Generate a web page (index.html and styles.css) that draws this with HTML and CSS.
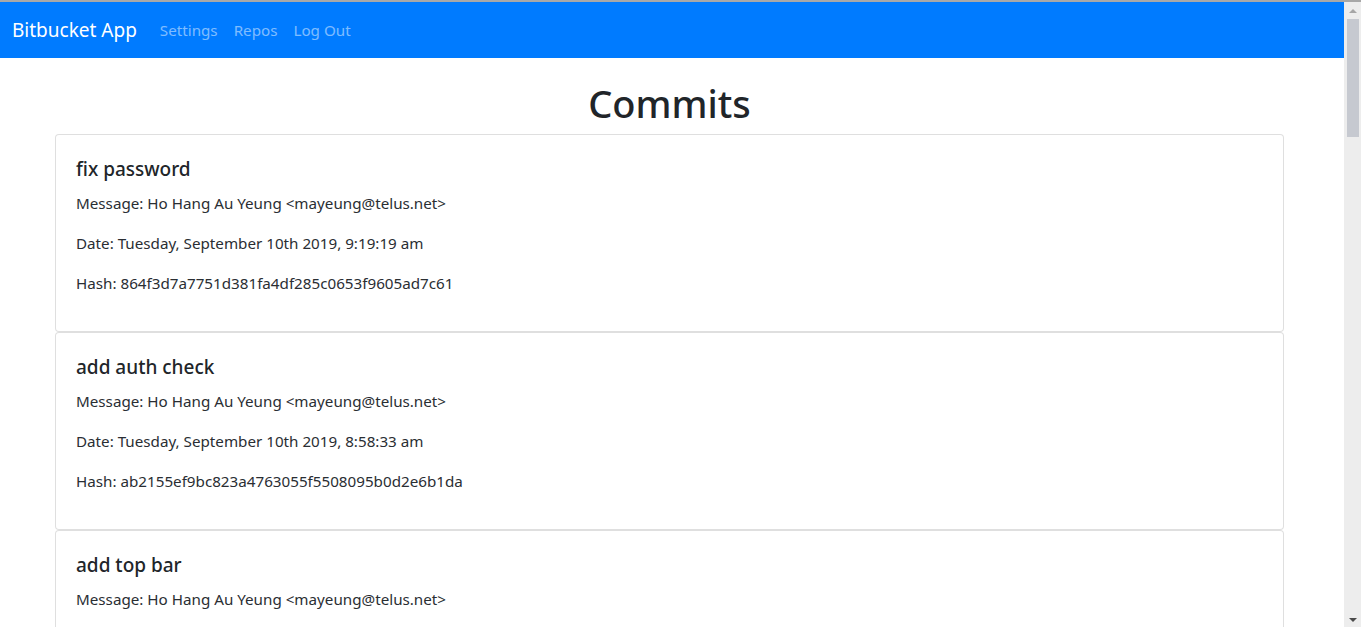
FILE: index.html
```html
<!DOCTYPE html>
<html lang="en">
<head>
<meta charset="utf-8">
<title>Bitbucket App</title>
<link rel="stylesheet" href="styles.css">
</head>
<body>
<div class="app">
  <div class="viewport">
    <nav class="navbar">
      <a class="brand" href="#">Bitbucket App</a>
      <ul class="nav">
        <li><a href="#">Settings</a></li>
        <li><a href="#">Repos</a></li>
        <li><a href="#">Log Out</a></li>
      </ul>
    </nav>
    <main class="page">
      <h1 class="page-title">Commits</h1>
      <div class="card"><div class="card-body">
        <h5 class="card-title">fix password</h5>
        <p>Message: Ho Hang Au Yeung &lt;mayeung@telus.net&gt;</p>
        <p>Date: Tuesday, September 10th 2019, 9:19:19 am</p>
        <p>Hash: 864f3d7a7751d381fa4df285c0653f9605ad7c61</p>
      </div></div>
      <div class="card"><div class="card-body">
        <h5 class="card-title">add auth check</h5>
        <p>Message: Ho Hang Au Yeung &lt;mayeung@telus.net&gt;</p>
        <p>Date: Tuesday, September 10th 2019, 8:58:33 am</p>
        <p>Hash: ab2155ef9bc823a4763055f5508095b0d2e6b1da</p>
      </div></div>
      <div class="card card-last"><div class="card-body">
        <h5 class="card-title">add top bar</h5>
        <p>Message: Ho Hang Au Yeung &lt;mayeung@telus.net&gt;</p>
      </div></div>
    </main>
  </div>
  <div class="scrollbar">
    <div class="sb-btn sb-up"><span class="arrow-up"></span></div>
    <div class="sb-thumb"></div>
    <div class="sb-track"></div>
    <div class="sb-btn sb-down"><span class="arrow-down"></span></div>
  </div>
</div>
</body>
</html>
```
FILE: styles.css
```css
html, body {
  margin: 0;
  height: 100%;
  overflow: hidden;
}
body {
  border-top: 2px solid #a8a8a8;
  box-sizing: border-box;
  font-family: "Noto Sans", "Open Sans", Arial, sans-serif;
  font-size: 15.2px;
  line-height: 24px;
  color: #2a2e33;
  background: #fff;
}
.app {
  display: flex;
  height: 625px;
}
.viewport {
  flex: 1;
  min-width: 0;
  overflow: hidden;
}

/* scrollbar drawn as part of layout */
.scrollbar {
  width: 17px;
  display: flex;
  flex-direction: column;
  background: #ededed;
}
.sb-btn {
  height: 17px;
  display: flex;
  align-items: center;
  justify-content: center;
}
.sb-thumb {
  height: 118px;
  margin: 0 2px 0 3px;
  background: #c6c9d0;
}
.sb-track {
  flex: 1;
}
.arrow-up {
  width: 0;
  height: 0;
  border-left: 4px solid transparent;
  border-right: 4px solid transparent;
  border-bottom: 4px solid #a6a6a6;
  margin-left: 1px;
}
.arrow-down {
  width: 0;
  height: 0;
  border-left: 4px solid transparent;
  border-right: 4px solid transparent;
  border-top: 4px solid #4a4a4a;
  margin-left: 1px;
  margin-top: 2px;
}

.navbar {
  display: flex;
  align-items: center;
  height: 56px;
  padding: 0 16px 0 12px;
  background: #007bff;
  box-sizing: border-box;
}
.brand {
  font-size: 19px;
  line-height: 30px;
  color: #fff;
  text-decoration: none;
  margin-right: 15px;
  padding: 5px 0;
}
.nav {
  display: flex;
  list-style: none;
  margin: 0;
  padding: 0;
}
.nav a {
  display: block;
  padding: 8px;
  color: rgba(255, 255, 255, 0.5);
  text-decoration: none;
}

.page {
  padding: 0 60px 0 55px;
}
.page-title {
  margin: 21px 0 7px;
  font-size: 38px;
  line-height: 48px;
  font-weight: 500;
  text-align: center;
  color: #212529;
}
.card {
  border: 1px solid rgba(0, 0, 0, 0.125);
  border-radius: 4px;
  background: #fff;
}
.card-body {
  padding: 20px;
}
.card-title {
  margin: 0 0 10px;
  padding-top: 2px;
  font-size: 19px;
  line-height: 24px;
  font-weight: 500;
  color: #212529;
}
.card-body p {
  margin: 0 0 16px;
}
```
